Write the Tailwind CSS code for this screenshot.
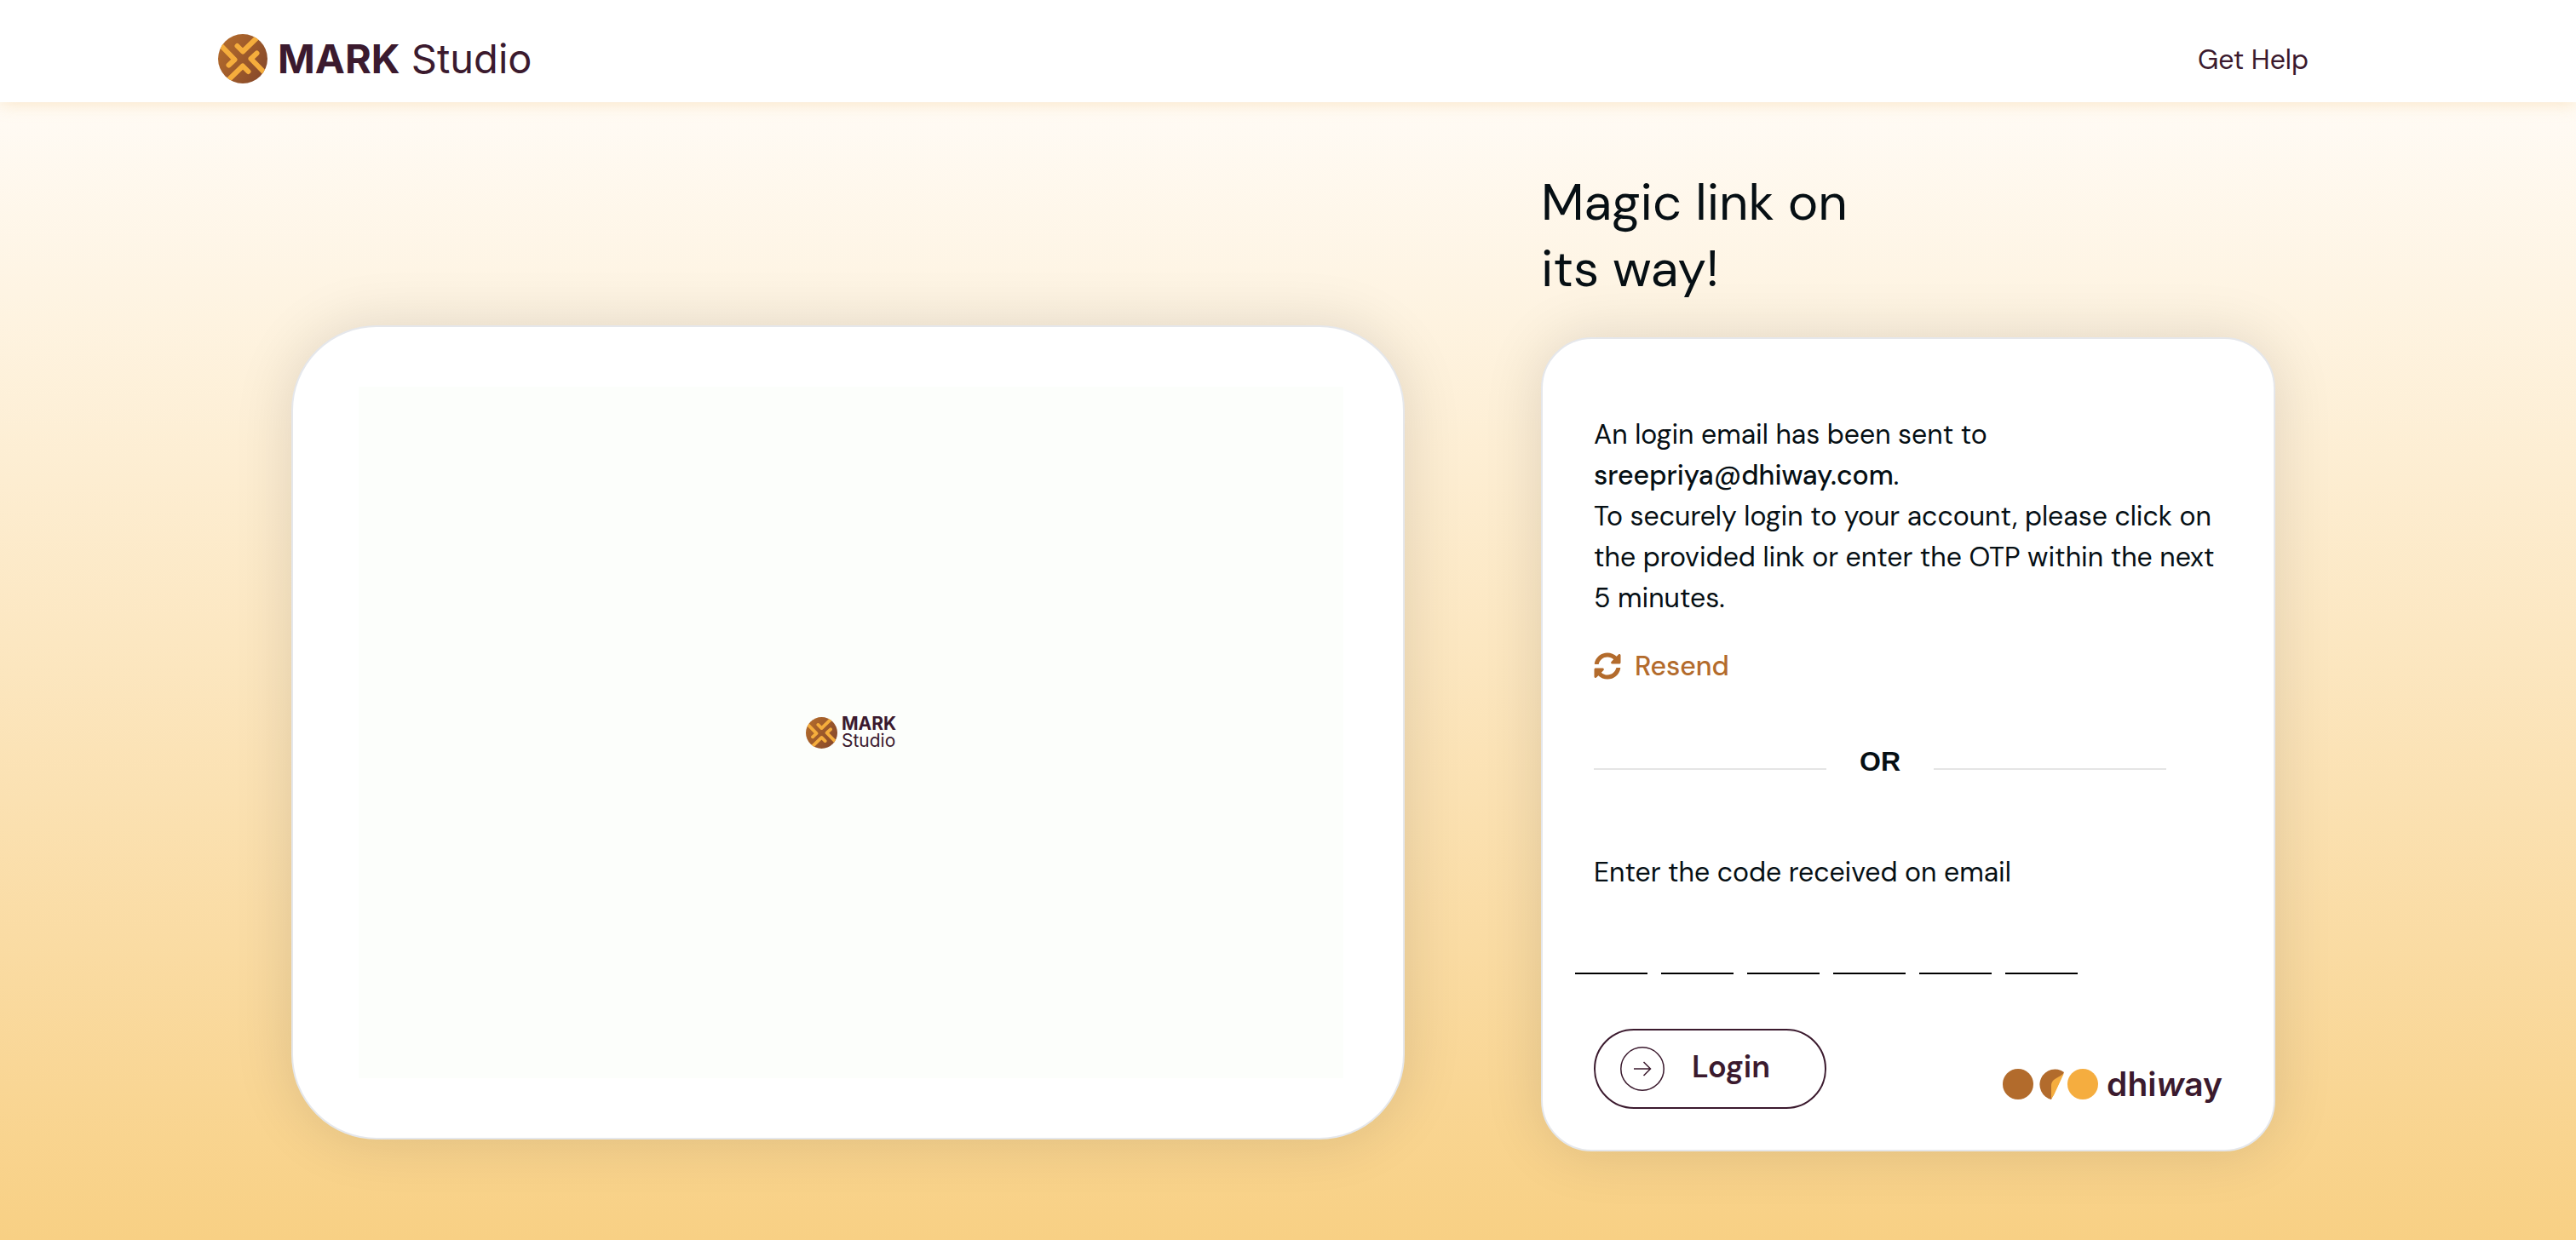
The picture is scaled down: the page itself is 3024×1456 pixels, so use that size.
<!DOCTYPE html>
<html lang="en">
<head>
<meta charset="utf-8">
<title>MARK Studio</title>
<script src="https://cdn.jsdelivr.net/npm/@tailwindcss/browser@4"></script>
</head>
<body class="flex min-h-screen flex-col bg-white font-['DM_Sans',Inter,sans-serif] [font-optical-sizing:none] text-[#060f14]">
<svg class="absolute size-0" aria-hidden="true">
  <defs>
    <linearGradient id="disc" x1="0" y1="0" x2="1" y2="0.6"><stop offset="0" stop-color="#b86f2c"/><stop offset="1" stop-color="#8a4b2a"/></linearGradient>
    <clipPath id="round"><circle cx="29" cy="29" r="29"/></clipPath>
    <symbol id="mark" viewBox="0 0 58 58">
      <circle cx="29" cy="29" r="29" fill="url(#disc)"/>
      <g clip-path="url(#round)" fill="none" stroke="#f5ad3c" stroke-width="6" stroke-linecap="round" stroke-linejoin="round">
        <path d="M48 2 29 20.500 22.500 14"/><path d="M57 48 38.500 29 45.500 22.500"/><path d="M10 56 29 37.500 35.500 44"/><path d="M1 11 19.500 30 12.500 36.500"/>
      </g>
    </symbol>
  </defs>
</svg>
<header class="relative z-10 flex h-[120px] items-center justify-between bg-white pr-[314px] pl-[256px] pt-[18px] shadow-[0_0_20px_rgba(240,190,110,0.4)]">
  <a href="#" class="flex items-center gap-3 font-[Inter,sans-serif] text-[47px] leading-[58px] text-[#3b1a2e]">
    <svg class="size-[58px]"><use href="#mark"/></svg>
    <span><b class="font-bold">MARK</b> Studio</span>
  </a>
  <a href="#" class="pt-[2px] text-[32px] leading-[48px] text-[#3b1a2e]">Get Help</a>
</header>
<main class="grid flex-1 grid-cols-[1307fr_862fr] items-start gap-[160px] bg-linear-to-b from-[#fffbf5] to-[#f8d084] pr-[353px] pl-[342px]">
  <section class="mt-[262px] h-[956px] rounded-[100px] border-2 border-[#e5e7eb] bg-white pt-[70px] pr-[70px] pl-[77px] shadow-[0_0_70px_rgba(0,0,0,0.12)]">
    <div class="flex h-[812px] items-center justify-center gap-[5px] bg-[#fcfefb]">
      <svg class="size-[37px]"><use href="#mark"/></svg>
      <p class="font-[Inter,sans-serif] text-[21px] leading-5 text-[#3b1a2e]"><b class="font-bold">MARK</b><br>Studio</p>
    </div>
  </section>
  <section class="pt-[79px]">
    <h1 class="text-[60px] leading-[78px]">Magic link on<br>its way!</h1>
    <form class="mt-[41px] h-[956px] rounded-[60px] border-2 border-[#e5e7eb] bg-white px-[60px] pt-[88px] shadow-[0_0_70px_rgba(0,0,0,0.12)]">
      <p class="text-[32px] leading-[48px] whitespace-nowrap">An login email has been sent to<br><span class="font-medium">sreepriya@dhiway.com</span>.<br>To securely login to your account, please click on<br>the provided link or enter the OTP within the next<br>5 minutes.</p>
      <button type="button" class="mt-8 flex items-center gap-4 text-[32px] leading-[48px] font-medium text-[#b36b2c]">
        <svg class="size-8" viewBox="0 0 512 512" fill="currentColor"><path d="M370.720 133.280C339.458 104.008 298.888 87.962 255.848 88c-77.458.068-144.328 53.178-162.791 126.850-1.344 5.363-6.122 9.150-11.651 9.150H24.103c-7.498 0-13.194-6.807-11.807-14.176C33.933 94.924 134.813 8 256 8c66.448 0 126.791 26.136 171.315 68.685L463.030 40.970C478.149 25.851 504 36.559 504 57.941V192c0 13.255-10.745 24-24 24H345.941c-21.382 0-32.090-25.851-16.971-40.971l41.750-41.749zM32 296h134.059c21.382 0 32.090 25.851 16.971 40.971l-41.750 41.750c31.262 29.273 71.835 45.319 114.876 45.280 77.418-.070 144.315-53.144 162.787-126.849 1.344-5.363 6.122-9.150 11.651-9.150h57.304c7.498 0 13.194 6.807 11.807 14.176C478.067 417.076 377.187 504 256 504c-66.448 0-126.791-26.136-171.315-68.685L48.970 471.030C33.851 486.149 8 475.441 8 454.059V320c0-13.255 10.745-24 24-24z"/></svg>
        Resend
      </button>
      <div class="mt-16 mr-[66px] flex items-center font-['Liberation_Sans',sans-serif] text-[32px] leading-[48px] font-bold">
        <span class="mt-[18px] h-[2px] flex-1 bg-[#e5e5e5]"></span>
        <span class="w-[126px] text-center">OR</span>
        <span class="mt-[18px] h-[2px] flex-1 bg-[#e5e5e5]"></span>
      </div>
      <label for="d1" class="mt-[82px] block text-[32px] leading-[48px]">Enter the code received on email</label>
      <div class="-ml-[22px] mt-[42px] flex gap-4">
        <input id="d1" aria-label="Digit 1" maxlength="1" class="h-[54px] w-[85px] border-b-2 border-black text-center outline-none">
        <input aria-label="Digit 2" maxlength="1" class="h-[54px] w-[85px] border-b-2 border-black text-center outline-none">
        <input aria-label="Digit 3" maxlength="1" class="h-[54px] w-[85px] border-b-2 border-black text-center outline-none">
        <input aria-label="Digit 4" maxlength="1" class="h-[54px] w-[85px] border-b-2 border-black text-center outline-none">
        <input aria-label="Digit 5" maxlength="1" class="h-[54px] w-[85px] border-b-2 border-black text-center outline-none">
        <input aria-label="Digit 6" maxlength="1" class="h-[54px] w-[85px] border-b-2 border-black text-center outline-none">
      </div>
      <div class="mt-16 flex items-center justify-between">
        <button type="submit" class="flex h-[94px] w-[273px] items-center gap-8 rounded-full border-2 border-[#3b1a2e] pl-[29px] text-[36px] font-semibold text-[#3b1a2e]">
          <svg class="size-[52px]" viewBox="0 0 52 52" fill="none" stroke="#3b1a2e" stroke-width="1.500"><circle cx="26" cy="26" r="25.200"/><path d="M16 26h19M27.500 18l8 8-8 8"/></svg>
          <span class="pb-1">Login</span>
        </button>
        <a href="#" aria-label="dhiway" class="flex items-center gap-[9px] pt-9">
          <svg class="h-9 w-[113px]" viewBox="0 0 113 36"><circle cx="18" cy="18" r="18" fill="#b26b2c"/><path d="M72 4A18 18 0 1 0 57 36Z" fill="#b26b2c"/><path d="M72 5C66 11 57 11 57 20V35L60 31Z" fill="#f5ad3f"/><circle cx="94" cy="18" r="18" fill="#f5ad3f"/></svg>
          <span class="font-[Inter,sans-serif] text-[39px] leading-9 font-semibold text-[#3b1a2e]">dhi<i>w</i>ay</span>
        </a>
      </div>
    </form>
  </section>
</main>
</body>
</html>
